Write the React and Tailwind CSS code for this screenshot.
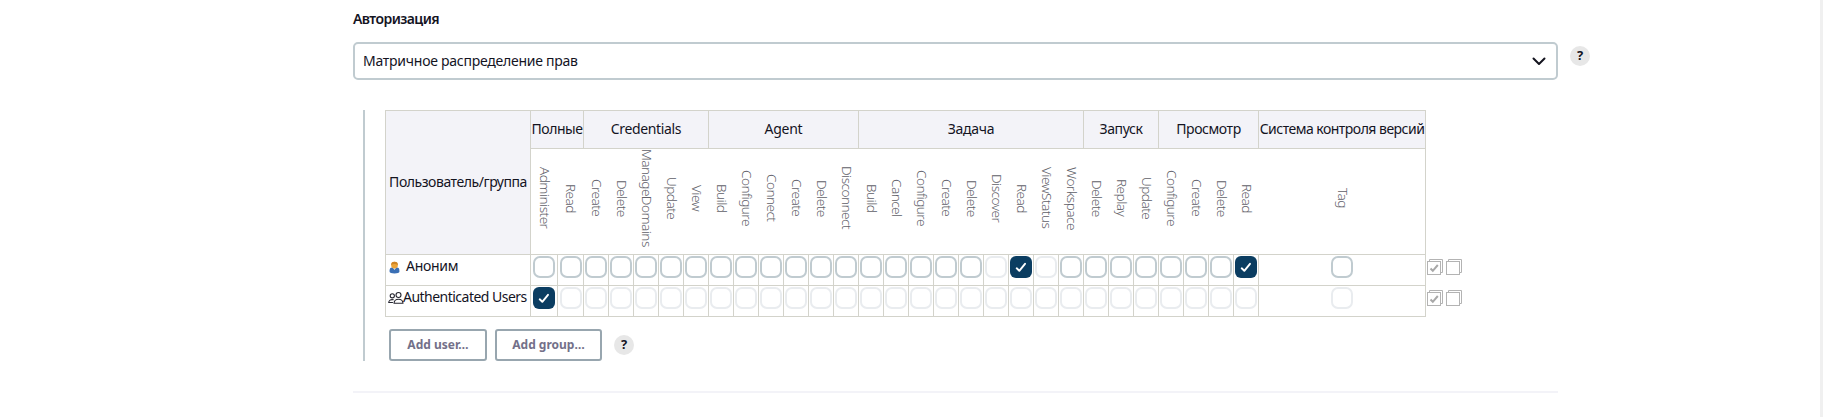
import React from "react";

const groups = [
  { name: "Полные", cls: "col-span-2 tracking-[-0.03em]" },
  { name: "Credentials", cls: "col-span-5 tracking-[-0.025em]" },
  { name: "Agent", cls: "col-span-6 tracking-[-0.02em]" },
  { name: "Задача", cls: "col-span-9 tracking-[-0.02em]" },
  { name: "Запуск", cls: "col-span-3 tracking-[-0.03em]" },
  { name: "Просмотр", cls: "col-span-4 tracking-[-0.03em]" },
  { name: "Система контроля версий", cls: "tracking-[-0.037em]" },
];

const permissions = [
  "Administer", "Read",
  "Create", "Delete", "ManageDomains", "Update", "View",
  "Build", "Configure", "Connect", "Create", "Delete", "Disconnect",
  "Build", "Cancel", "Configure", "Create", "Delete", "Discover", "Read", "ViewStatus", "Workspace",
  "Delete", "Replay", "Update",
  "Configure", "Create", "Delete", "Read",
  "Tag",
];

const cell = "border-l border-t border-[#d3d3cb]";

function Check({ state }) {
  if (state === "on") {
    return (
      <span className="flex h-[22px] w-[22px] shrink-0 items-center justify-center rounded-[6px] bg-[#0b3d61]">
        <svg width="22" height="22" viewBox="0 0 22 22" fill="none" stroke="#fff" strokeWidth="1.9" strokeLinecap="round" strokeLinejoin="round">
          <path d="M6.700 12.300 9.300 14.800 15 7.800" />
        </svg>
      </span>
    );
  }
  return (
    <span
      className={
        state === "off"
          ? "h-[22px] w-[22px] shrink-0 rounded-[7px] border-2 border-[#e9ecef] bg-white"
          : "h-[22px] w-[22px] shrink-0 rounded-[7px] border-2 border-[#c0cbd0] bg-white"
      }
    />
  );
}

function Help() {
  return (
    <span className="flex h-5 w-5 items-center justify-center rounded-full bg-[#e7e7e7] text-[13px] leading-none font-bold">
      <span className="-mt-px">?</span>
    </span>
  );
}

function Person() {
  return (
    <svg width="11" height="13" viewBox="0 0 11 13">
      <path d="M.6 11V9.500Q.6 6.500 3 6.500h5q2.400 0 2.400 3V11q-.4 1.400-4.900 1.400T.6 11Z" fill="#3a6fb5" />
      <path d="M3.600 6.500h3.800l-1.900 2.600Z" fill="#dfe6ef" />
      <circle cx="5.500" cy="4.100" r="3.400" fill="#eda53a" />
      <path d="M2.100 4.100a3.400 3.400 0 0 1 6.800 0Q5.500 1.800 2.100 4.100Z" fill="#cf8526" />
    </svg>
  );
}

function People() {
  return (
    <svg width="16" height="14" viewBox="0 0 16 14" fill="none" stroke="#25252f" strokeWidth="1.100" strokeLinecap="round" strokeLinejoin="round">
      <circle cx="4.300" cy="4.800" r="2.100" />
      <circle cx="10.500" cy="4" r="2.500" />
      <path d="M5.300 8.700C2.600 8.200.9 9.400.7 11.500h3.800" />
      <path d="M6 12.300c.2-2.700 2-4 4.500-4s4.300 1.300 4.500 4Z" />
    </svg>
  );
}

function Stack({ checked }) {
  return (
    <svg width="16" height="16" viewBox="0 0 16 16" fill="none" stroke="#b3b3b3">
      <path d="M2.500 2.500V.5h13v13h-2" />
      <rect x=".5" y="2.500" width="13" height="13" />
      {checked && <path d="m3.500 9.500 2.300 2.300L10.800 6" strokeWidth="2" stroke="#a8a8a8" />}
    </svg>
  );
}

function Row({ children, stateOf }) {
  return (
    <>
      <div className={`${cell} flex items-start`}>{children}</div>
      {permissions.map((_, i) => (
        <div key={i} className={`${cell} flex justify-center pt-px`}>
          <Check state={stateOf(i)} />
        </div>
      ))}
    </>
  );
}

export default function App() {
  return (
    <div className="flex h-[417px] w-full justify-between overflow-hidden bg-white font-['Noto_Sans','Open_Sans',sans-serif] text-[14px] text-[#14141f]">
      <main className="ml-[353px] w-[1240px]">
        <div className="mt-[9px] h-[33px] text-[14px] leading-5 font-semibold tracking-[-0.04em]">Авторизация</div>
        <div className="flex">
          <div className="flex h-[38px] w-[1205px] items-center justify-between rounded-[5px] border-2 border-[#c0cbd0] pr-[10px] pl-2">
            <span className="pb-[2px] tracking-[-0.018em]">Матричное распределение прав</span>
            <svg width="14" height="9" viewBox="0 0 14 9" fill="none" stroke="#14141f" strokeWidth="2" strokeLinecap="round" strokeLinejoin="round">
              <path d="m1.500 1.500 5.500 5.500 5.500-5.500" />
            </svg>
          </div>
          <div className="mt-1 ml-3"><Help /></div>
        </div>

        <section className="mt-[30px] ml-[10px] h-[251px] border-l-2 border-[#c0cbd0] pl-5">
          <div className="flex">
            <div className="grid grid-cols-[145px_27px_26px_repeat(27,25px)_167px] grid-rows-[38px_106px_31px_31px] border-r border-b border-[#d3d3cb] whitespace-nowrap">
              <div className={`${cell} row-span-2 flex items-center justify-center bg-[#f3f3f8] pb-[2px] tracking-[-0.032em]`}>Пользователь/группа</div>
              {groups.map((g) => (
                <div key={g.name} className={`${cell} flex items-center justify-center bg-[#f3f3f8] pb-[2px] ${g.cls}`}>{g.name}</div>
              ))}
              {permissions.map((p, i) => (
                <div key={i} className={`flex items-center justify-center border-t border-[#d3d3cb] pb-[7px] pl-[2px] text-[13.500px] font-light tracking-[-0.037em] text-[#606068] ${i === 0 ? "border-l" : ""}`}>
                  <span className="leading-5 [writing-mode:vertical-rl]">{p}</span>
                </div>
              ))}
              <Row stateOf={(i) => (i === 19 || i === 28 ? "on" : i === 18 || i === 20 ? "off" : "free")}>
                <span className="mt-[6px] ml-[3px]"><Person /></span>
                <span className="ml-[6px] leading-[21px] tracking-[-0.02em]">Аноним</span>
              </Row>
              <Row stateOf={(i) => (i === 0 ? "on" : "off")}>
                <span className="mt-[5px] ml-[2px] shrink-0"><People /></span>
                <span className="-ml-px leading-[21px] tracking-[-0.037em]">Authenticated Users</span>
              </Row>
            </div>
            <div className="flex flex-col gap-[15px] pt-[149px] pl-px">
              {[0, 1].map((i) => (
                <div key={i} className="flex gap-[3px]"><Stack checked /><Stack /></div>
              ))}
            </div>
          </div>
          <div className="mt-3 ml-1 flex items-center text-[12px] font-bold text-[#737089]">
            <span className="flex h-8 w-[98px] items-center justify-center rounded-[3px] border-2 border-[#98a6af]">Add user…</span>
            <span className="ml-2 flex h-8 w-[107px] items-center justify-center rounded-[3px] border-2 border-[#98a6af]">Add group…</span>
            <span className="ml-3 text-[#14141f]"><Help /></span>
          </div>
        </section>
        <div className="mt-[30px] h-[2px] w-[1205px] bg-[#f3f3f8]" />
      </main>
      <div className="w-[3px] bg-[#f0f0f0]" />
    </div>
  );
}
